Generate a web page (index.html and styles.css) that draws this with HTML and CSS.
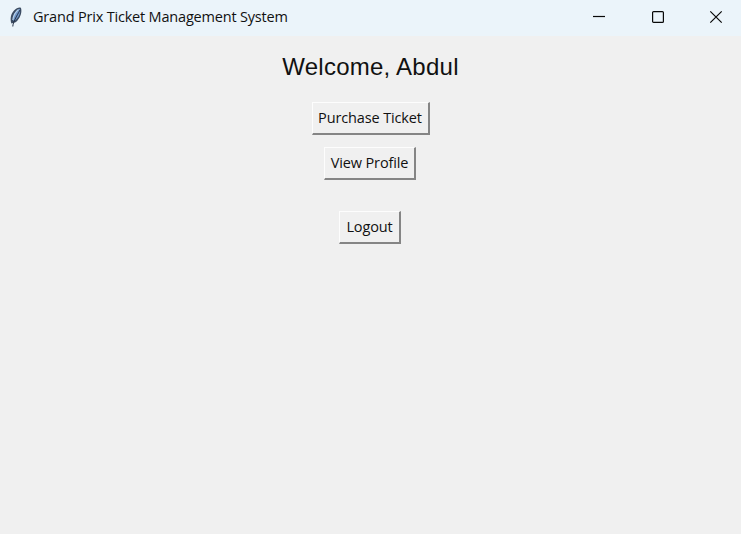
FILE: index.html
```html
<!DOCTYPE html>
<html lang="en">
<head>
<meta charset="utf-8">
<title>Grand Prix Ticket Management System</title>
<link rel="stylesheet" href="styles.css">
</head>
<body>
<header class="titlebar">
  <svg class="feather" width="14" height="22" viewBox="0 0 14 22" aria-hidden="true">
    <path d="M2.400 17.500C1 13.500 1.500 8 5 4.500C7.500 2 10.500 1 12 2C13.200 6 11.500 11 8.500 14.500C7 16.300 5 17 3.800 17Z" fill="#3c4c62"/>
    <path d="M4 14.500C4 9 6 5 10.800 2.800C12 7 9.500 12 5.500 15Z" fill="#6f96c8"/>
    <path d="M3.800 14C4.500 9 7 5.500 9.500 3.500" fill="none" stroke="#b5cee8" stroke-width="1.200"/>
    <path d="M3.800 20.500C4 16 7.500 10.500 11 4" fill="none" stroke="#253247" stroke-width="1"/>
  </svg>
  <span class="title">Grand Prix Ticket Management System</span>
  <div class="controls">
    <svg width="14" height="14" viewBox="0 0 14 14" role="img" aria-label="Minimize"><path d="M1 6.500H13"/></svg>
    <svg width="14" height="14" viewBox="0 0 14 14" role="img" aria-label="Maximize"><rect x="1.600" y="1.600" width="10.800" height="10.800" rx="1"/></svg>
    <svg width="14" height="14" viewBox="0 0 14 14" role="img" aria-label="Close"><path d="M1.300 1.300L12.700 12.700M12.700 1.300L1.300 12.700"/></svg>
  </div>
</header>
<main class="content">
  <h1 class="welcome">Welcome, Abdul</h1>
  <button class="button purchase">Purchase Ticket</button>
  <button class="button profile">View Profile</button>
  <button class="button logout">Logout</button>
</main>
</body>
</html>
```
FILE: styles.css
```css
* { box-sizing: border-box; }
body {
  margin: 0;
  height: 534px;
  overflow: hidden;
  background: #f0f0f0;
  color: #111;
  font-family: "Open Sans", "Noto Sans", sans-serif;
}
.titlebar {
  display: flex;
  align-items: center;
  height: 36px;
  padding: 0 18px 2px 9px;
  background: #ebf4fa;
}
.feather { margin-top: -1px; }
.title {
  margin-left: 10px;
  font-size: 14.500px;
  line-height: 20px;
  letter-spacing: -0.190px;
  white-space: nowrap;
}
.controls {
  display: flex;
  gap: 44.500px;
  margin-left: auto;
}
.controls svg {
  display: block;
  fill: none;
  stroke: #080808;
  stroke-width: 1.200;
}
.content {
  display: flex;
  flex-direction: column;
  align-items: center;
}
.welcome {
  margin: 15px 0 0;
  height: 51px;
  font: 24px/31px "Liberation Sans", sans-serif;
  letter-spacing: 0.250px;
}
.button {
  height: 33px;
  padding: 0;
  border: 2px solid;
  border-color: #fdfdfd #858585 #858585 #fdfdfd;
  border-top-width: 1px;
  border-left-width: 1px;
  background: #f0f0f0;
  color: #111;
  font: 14.500px/28px "Open Sans", "Noto Sans", sans-serif;
  letter-spacing: -0.130px;
  white-space: nowrap;
}
.purchase { width: 118px; }
.profile { width: 92px; margin: 12px 1px 0 0; }
.logout { width: 62px; margin: 31px 1px 0 0; }
```
